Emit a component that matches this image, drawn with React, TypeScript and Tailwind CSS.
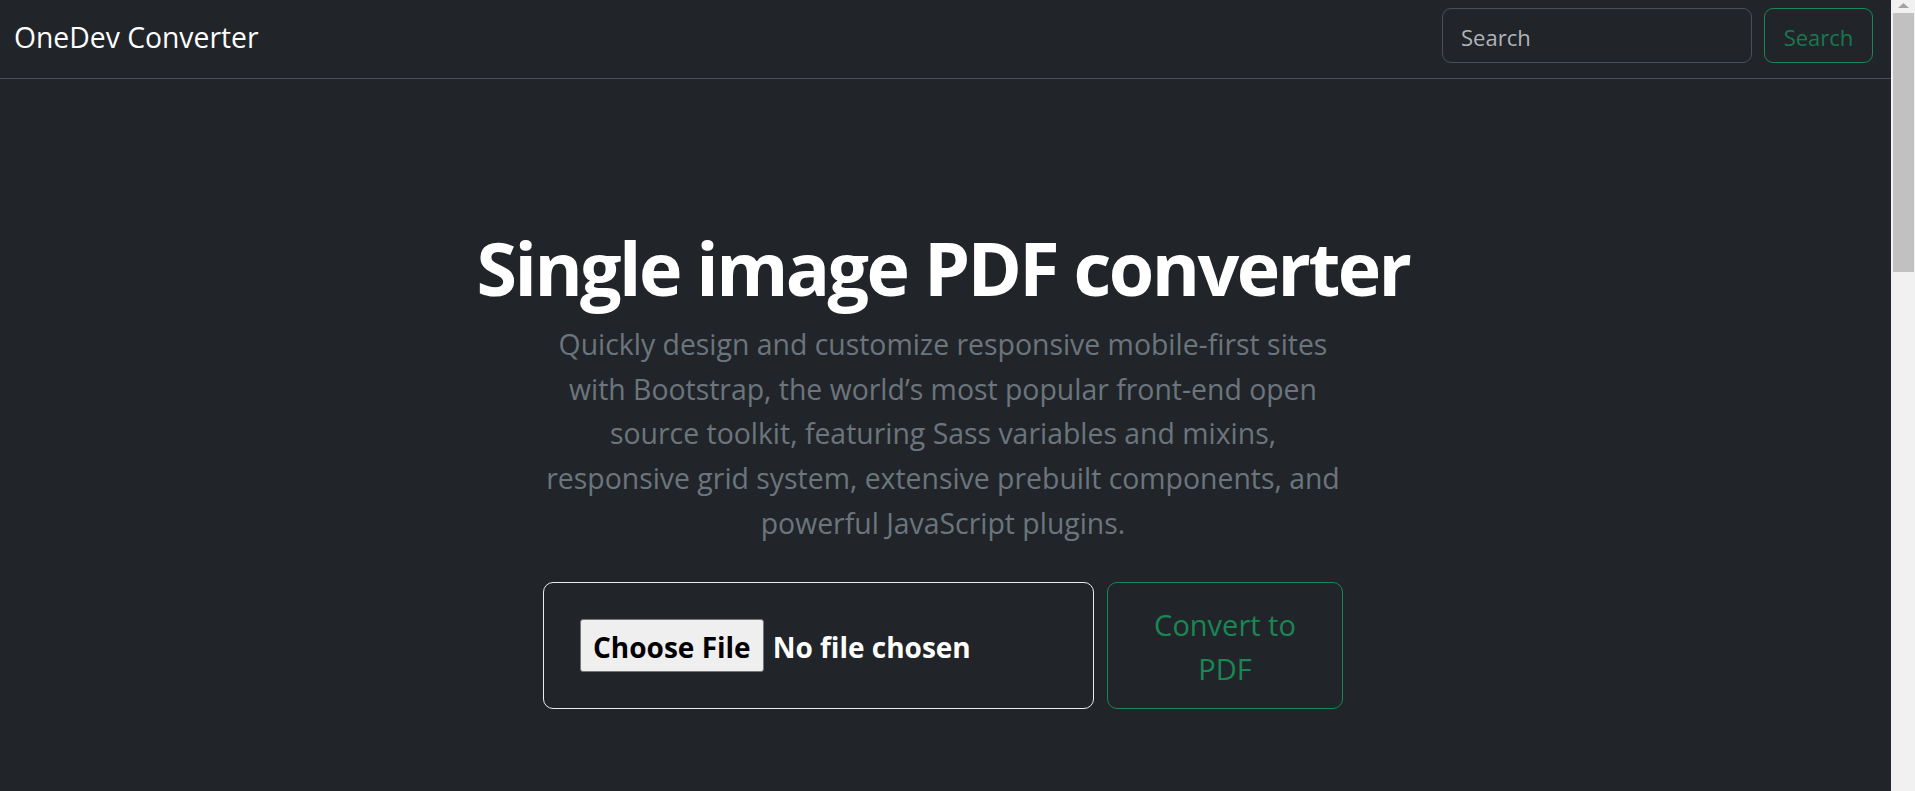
export default function App() {
  return (
    <div className="flex h-screen w-full overflow-hidden bg-[#212529] font-['Open_Sans',sans-serif]">
      <div className="flex min-w-0 flex-1 flex-col">
        <nav className="flex h-[79px] shrink-0 items-start justify-between border-b border-[#4b5056] pl-[14px] pr-[18px]">
          <a className="mt-[16px] text-[28.3px] leading-[42px] text-white">OneDev Converter</a>
          <form className="mt-[8px] flex gap-[12px]">
            <input
              type="search"
              placeholder="Search"
              className="h-[55px] w-[310px] rounded-[9px] border border-[#495057] bg-[#212529] px-[18px] pt-[2px] text-[22px] text-white outline-none placeholder:text-[#b0b4b8]"
            />
            <button
              type="button"
              className="h-[55px] w-[109px] rounded-[9px] border border-[#198754] pt-[3px] text-[22px] text-[#19784c]"
            >
              Search
            </button>
          </form>
        </nav>

        <main className="flex flex-col items-center pr-[5px] pt-[145px]">
          <h1 className="text-[73.5px] font-bold leading-[88.8px] tracking-[-0.035em] text-white">
            Single image PDF converter
          </h1>
          <p className="mt-[9px] text-center text-[28.4px] leading-[44.8px] text-[#6c757d]">
            Quickly design and customize responsive mobile-first sites
            <br />
            with Bootstrap, the world’s most popular front-end open
            <br />
            source toolkit, featuring Sass variables and mixins,
            <br />
            responsive grid system, extensive prebuilt components, and
            <br />
            powerful JavaScript plugins.
          </p>

          <div className="mt-[36px] flex w-[800px] gap-[13px]">
            <div className="flex h-[127px] w-[551px] items-center rounded-[10px] border border-[#e9ecef] px-[36px]">
              <span className="h-[53px] rounded-[3px] border border-[#767676] bg-[#efefef] px-[12px] text-[28px] font-bold leading-[55px] text-black">
                Choose File
              </span>
              <span className="ml-[9px] mt-[4px] text-[28px] font-bold leading-[51px] text-white">No file chosen</span>
            </div>
            <button
              type="button"
              className="flex h-[127px] w-[236px] items-center justify-center rounded-[10px] border border-[#198754] pt-[3px] text-center text-[29px] leading-[44px] text-[#198754]"
            >
              Convert to
              <br />
              PDF
            </button>
          </div>
        </main>
      </div>

      <div className="flex w-[24px] shrink-0 flex-col items-center bg-[#f1f1f1]">
        <svg width="11" height="5" viewBox="0 0 11 5" className="mt-[3px]">
          <polygon points="0,5 5.5,0 11,5" fill="#a3a3a3" />
        </svg>
        <div className="ml-[2px] mr-[1px] mt-[5px] h-[259px] w-[21px] bg-[#c1c1c1]" />
      </div>
    </div>
  )
}
